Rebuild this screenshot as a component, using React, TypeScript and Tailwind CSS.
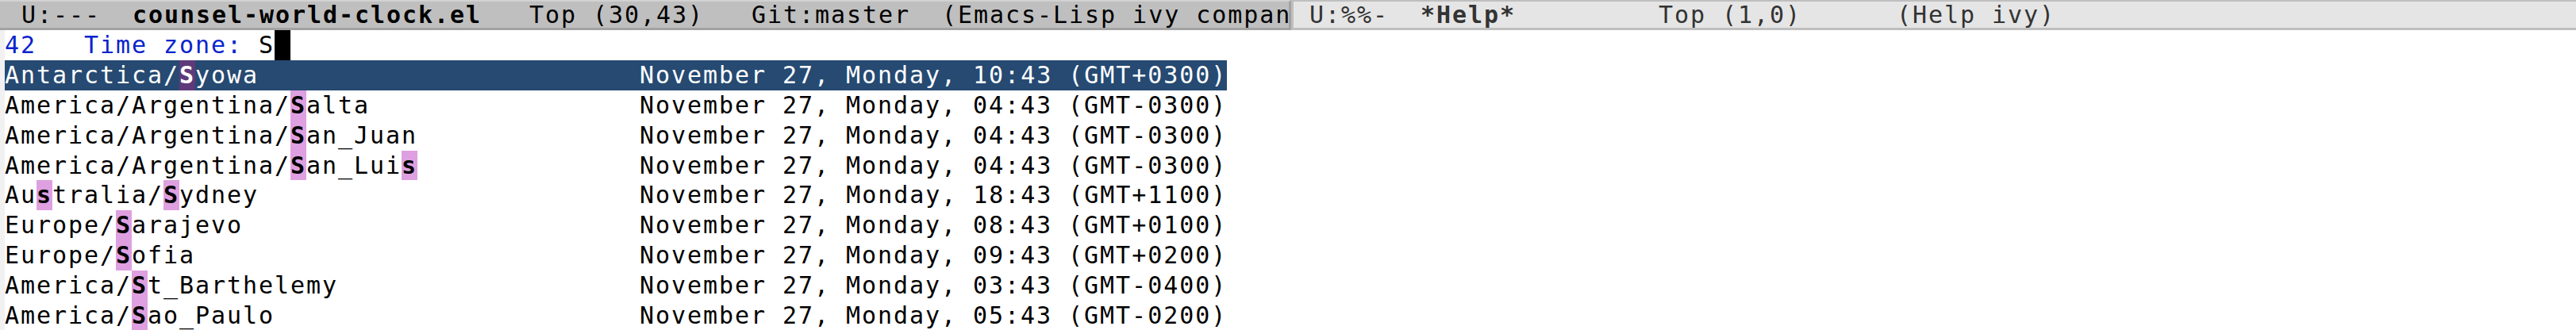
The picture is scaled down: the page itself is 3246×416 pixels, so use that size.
const DATE = (time: string, zone: string) => `November 27, Monday, ${time} (GMT${zone})`;

type Candidate = { name: string; date: string; hits: number[] };

const CANDIDATES: Candidate[] = [
  { name: "Antarctica/Syowa", date: DATE("10:43", "+0300"), hits: [11] },
  { name: "America/Argentina/Salta", date: DATE("04:43", "-0300"), hits: [18] },
  { name: "America/Argentina/San_Juan", date: DATE("04:43", "-0300"), hits: [18] },
  { name: "America/Argentina/San_Luis", date: DATE("04:43", "-0300"), hits: [18, 25] },
  { name: "Australia/Sydney", date: DATE("18:43", "+1100"), hits: [2, 10] },
  { name: "Europe/Sarajevo", date: DATE("08:43", "+0100"), hits: [7] },
  { name: "Europe/Sofia", date: DATE("09:43", "+0200"), hits: [7] },
  { name: "America/St_Barthelemy", date: DATE("03:43", "-0400"), hits: [8] },
  { name: "America/Sao_Paulo", date: DATE("05:43", "-0200"), hits: [8] },
];

function split(text: string, hits: number[]) {
  const out: { s: string; hit: boolean }[] = [];
  let i = 0;
  for (const h of hits) {
    if (h > i) out.push({ s: text.slice(i, h), hit: false });
    out.push({ s: text[h], hit: true });
    i = h + 1;
  }
  out.push({ s: text.slice(i), hit: false });
  return out;
}

function CandidateRow({ c, current }: { c: Candidate; current: boolean }) {
  const line = c.name.padEnd(40, " ") + c.date;
  return (
    <div
      className={`h-[37.9px] w-fit leading-[37.9px] ${
        current ? "bg-[#264a72] text-white" : "text-black"
      }`}
    >
      {split(line, c.hits).map((seg, i) =>
        seg.hit ? (
          <span
            key={i}
            className={`inline-block align-top font-bold ${
              current ? "bg-[#5f3a7a]" : "bg-[#dea0e0]"
            }`}
          >
            {seg.s}
          </span>
        ) : (
          <span key={i}>{seg.s}</span>
        )
      )}
    </div>
  );
}

export default function App() {
  return (
    <div className="h-[416px] w-[3246px] overflow-hidden whitespace-pre bg-white font-['DejaVu_Sans_Mono',monospace] text-[30px] tracking-[1.94px]">
      {/* mode lines of the two windows */}
      <div className="flex h-[38px]">
        <div className="h-full w-[1627px] overflow-hidden border-t-2 border-r-[3px] border-b-[3px] border-t-[#d2d2d2] border-r-[#a2a2a2] border-b-[#a2a2a2] bg-[#bfbfbf] pl-[7px] leading-[33px] text-black">
          {" U:---  "}
          <span className="font-bold">counsel-world-clock.el</span>
          {"   Top (30,43)   Git:master  (Emacs-Lisp ivy compan"}
        </div>
        <div className="h-full flex-1 overflow-hidden border-t-2 border-b-[3px] border-l-[3px] border-[#bfbfbf] bg-[#e5e5e5] leading-[33px] text-[#333333]">
          {" U:%%-  "}
          <span className="font-bold">*Help*</span>
          {"         Top (1,0)      (Help ivy)"}
        </div>
      </div>

      {/* minibuffer */}
      <div className="flex">
        <div className="w-[6px] shrink-0 bg-[#f1f1f1]" />
        <div className="flex-1">
          <div className="h-[37.9px] leading-[37.9px]">
            <span className="text-[#0a24cc]">{"42   Time zone: "}</span>
            <span className="text-black">S</span>
            <span className="inline-block h-[37.9px] w-[20px] bg-black align-top" />
          </div>
          {CANDIDATES.map((c, i) => (
            <CandidateRow key={c.name} c={c} current={i === 0} />
          ))}
        </div>
      </div>
    </div>
  );
}
